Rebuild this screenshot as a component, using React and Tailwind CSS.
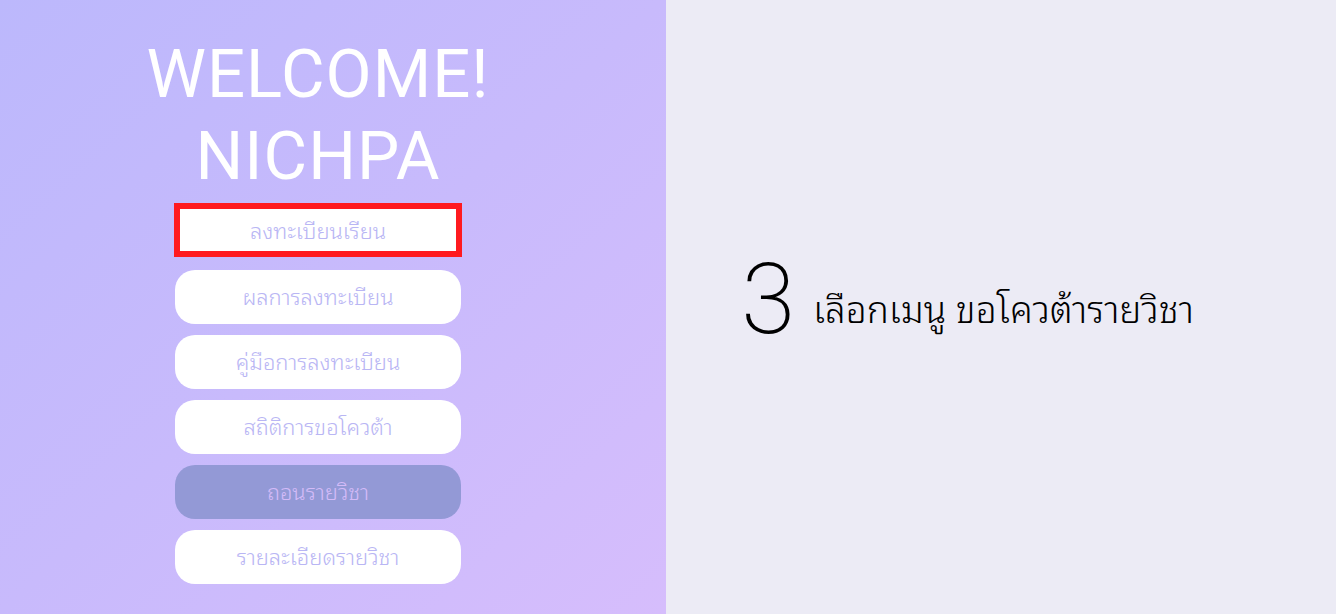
const menu = [
  { label: 'ผลการลงทะเบียน' },
  { label: 'คู่มือการลงทะเบียน' },
  { label: 'สถิติการขอโควต้า' },
  { label: 'ถอนรายวิชา', active: true },
  { label: 'รายละเอียดรายวิชา' },
];

const thai = { fontFamily: '"Noto Sans Thai Looped", "Noto Sans", "Noto Sans Thai", Roboto, sans-serif' };

const App = () => {
  return (
    <div className="flex h-[614px] w-[1336px] overflow-hidden" style={thai}>
      <div className="flex w-[666px] flex-col items-center bg-gradient-to-br from-[#bcb8fc] via-[#c8bafc] to-[#d6bdfc] pr-[30px]">
        <h1 className="mt-[33px] text-center text-[67px] font-normal leading-[82px] tracking-[1px] text-white" style={{ fontFamily: 'Roboto, "Liberation Sans", sans-serif' }}>
          WELCOME!
          <br />
          NICHPA
        </h1>
        <div className="mt-[6px] flex flex-col gap-[11px]">
          <button className="mb-[2px] flex h-[54px] w-[288px] items-center justify-center border-[6px] border-[#ff1a1f] bg-white pb-[2px] text-[22px] font-light text-[#b9b6f4]">
            ลงทะเบียนเรียน
          </button>
          {menu.map((item) => (
            <button
              key={item.label}
              className={`flex h-[54px] w-[286px] items-center justify-center self-center rounded-[20px] pb-[3px] text-[22px] font-light ${
                item.active ? 'bg-[#9399d6] text-[#d4bbf8]' : 'bg-white text-[#b9b6f4]'
              }`}
            >
              {item.label}
            </button>
          ))}
        </div>
      </div>
      <div className="flex flex-1 items-center justify-center bg-[#ecebf5] pb-[14px] pr-[67px]">
        <span className="text-[98px] font-extralight leading-none text-black" style={{ fontFamily: 'Roboto, sans-serif' }}>3</span>
        <span className="ml-[18px] mt-[14px] text-[37px] font-light text-black">เลือกเมนู ขอโควต้ารายวิชา</span>
      </div>
    </div>
  );
};

export default App;
